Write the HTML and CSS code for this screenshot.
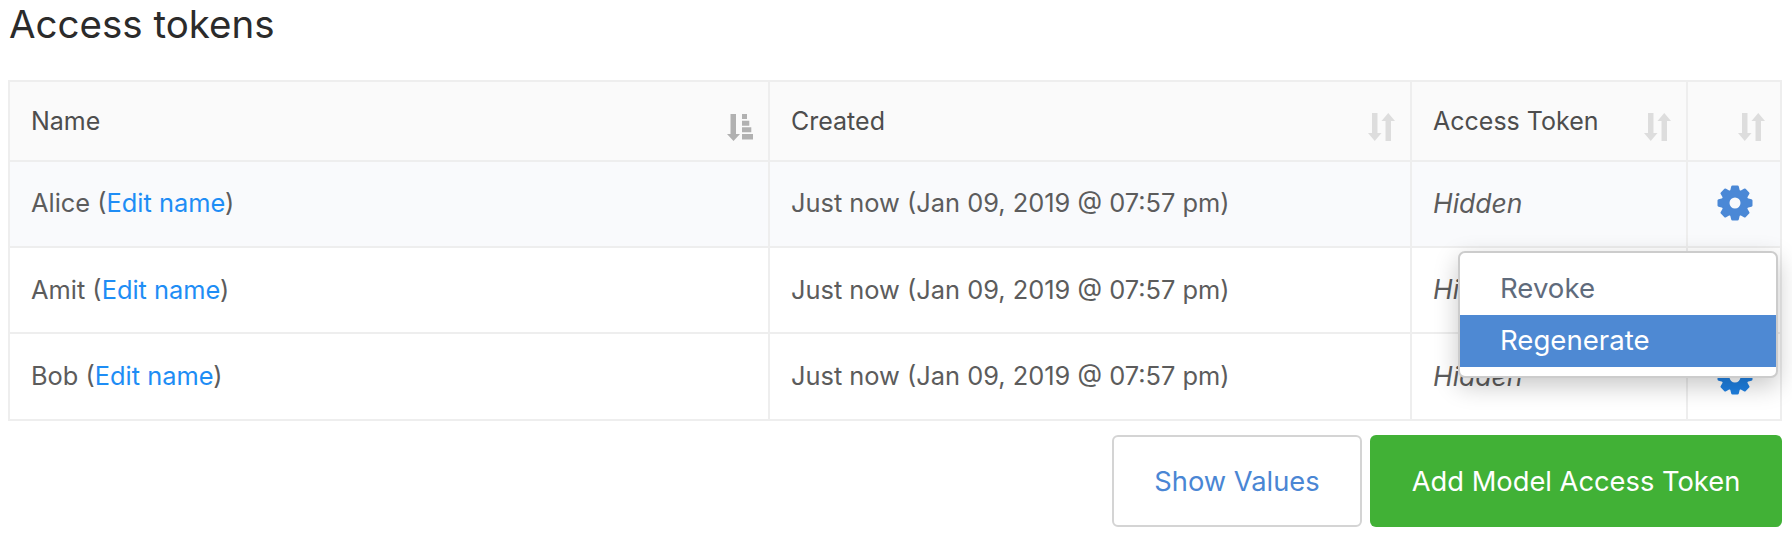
FILE: index.html
```html
<!DOCTYPE html>
<html lang="en">
<head>
<meta charset="utf-8">
<title>Access tokens</title>
<link rel="stylesheet" href="styles.css">
</head>
<body>
<svg class="defs" width="0" height="0" aria-hidden="true">
  <defs>
    <symbol id="sort" viewBox="0 0 27 28">
      <path d="M4 0h5.5v20H13.5L6.75 28 0 20H4z"/>
      <path d="M17.5 28h5.5V8h4L20.25 0 13.5 8h4z"/>
    </symbol>
    <symbol id="sorted" viewBox="0 0 26 27">
      <path d="M3.5 0h5.5v20H13L6.5 27 0 20H3.5z"/>
      <path d="M15 0h5v5h-5zM15 6.7h7.3v5H15zM15 13.3h9.3v5H15zM15 20h11.5v5.5H15z"/>
    </symbol>
    <symbol id="cog" viewBox="0 0 36 36">
      <path fill-rule="evenodd" d="M18 4.5a13.5 13.5 0 1 0 0 27 13.5 13.5 0 1 0 0-27zM18 12.5a5.5 5.5 0 1 1 0 11 5.5 5.5 0 1 1 0-11z"/>
      <path d="M13 6.5 14.2 1.6Q14.4.5 15.5.5H20.5Q21.6.5 21.8 1.6L23 6.5z"/>
      <path d="M13 6.5 14.2 1.6Q14.4.5 15.5.5H20.5Q21.6.5 21.8 1.6L23 6.5z" transform="rotate(45 18 18)"/>
      <path d="M13 6.5 14.2 1.6Q14.4.5 15.5.5H20.5Q21.6.5 21.8 1.6L23 6.5z" transform="rotate(90 18 18)"/>
      <path d="M13 6.5 14.2 1.6Q14.4.5 15.5.5H20.5Q21.6.5 21.8 1.6L23 6.5z" transform="rotate(135 18 18)"/>
      <path d="M13 6.5 14.2 1.6Q14.4.5 15.5.5H20.5Q21.6.5 21.8 1.6L23 6.5z" transform="rotate(180 18 18)"/>
      <path d="M13 6.5 14.2 1.6Q14.4.5 15.5.5H20.5Q21.6.5 21.8 1.6L23 6.5z" transform="rotate(225 18 18)"/>
      <path d="M13 6.5 14.2 1.6Q14.4.5 15.5.5H20.5Q21.6.5 21.8 1.6L23 6.5z" transform="rotate(270 18 18)"/>
      <path d="M13 6.5 14.2 1.6Q14.4.5 15.5.5H20.5Q21.6.5 21.8 1.6L23 6.5z" transform="rotate(315 18 18)"/>
    </symbol>
  </defs>
</svg>
<main class="page">
  <h1 class="title">Access tokens</h1>
  <div class="table-wrap">
    <table class="tokens">
      <colgroup>
        <col class="col-name"><col class="col-created"><col class="col-token"><col class="col-actions">
      </colgroup>
      <thead>
        <tr>
          <th><div class="head"><span>Name</span><svg class="icon-sorted"><use href="#sorted"/></svg></div></th>
          <th><div class="head"><span>Created</span><svg class="icon-sort"><use href="#sort"/></svg></div></th>
          <th><div class="head"><span>Access Token</span><svg class="icon-sort"><use href="#sort"/></svg></div></th>
          <th><div class="head"><span></span><svg class="icon-sort"><use href="#sort"/></svg></div></th>
        </tr>
      </thead>
      <tbody>
        <tr class="tinted">
          <td>Alice (<a href="#">Edit name</a>)</td>
          <td>Just now (Jan 09, 2019 @ 07:57 pm)</td>
          <td class="hidden-value">Hidden</td>
          <td class="actions"><svg class="cog"><use href="#cog"/></svg></td>
        </tr>
        <tr>
          <td>Amit (<a href="#">Edit name</a>)</td>
          <td>Just now (Jan 09, 2019 @ 07:57 pm)</td>
          <td class="hidden-value">Hidden</td>
          <td class="actions"><svg class="cog cog-bright"><use href="#cog"/></svg></td>
        </tr>
        <tr class="last">
          <td>Bob (<a href="#">Edit name</a>)</td>
          <td>Just now (Jan 09, 2019 @ 07:57 pm)</td>
          <td class="hidden-value">Hidden</td>
          <td class="actions"><svg class="cog cog-bright"><use href="#cog"/></svg></td>
        </tr>
      </tbody>
    </table>
    <ul class="menu">
      <li>Revoke</li>
      <li class="active">Regenerate</li>
    </ul>
  </div>
  <div class="buttons">
    <button class="btn btn-outline" type="button">Show Values</button>
    <button class="btn btn-green" type="button">Add Model Access Token</button>
  </div>
</main>
</body>
</html>
```
FILE: styles.css
```css
* { box-sizing: border-box; }
html, body { margin: 0; background: #fff; }
body { font-family: Inter, "Noto Sans", "Liberation Sans", sans-serif; color: #5c5c5c; height: 538px; overflow: hidden; }
.defs { position: absolute; }
.page { padding: 0 10px 0 8px; }
.title { margin: 0; height: 80px; padding-top: 1px; padding-left: 1px; font-size: 38.5px; line-height: 46px; font-weight: 400; color: #2b2b2b; }
.table-wrap { position: relative; width: 1772px; }
.tokens { width: 1772px; table-layout: fixed; border-collapse: collapse; font-size: 25.4px; border: 2px solid #eee; }
.col-name { width: 760px; }
.col-created { width: 642px; }
.col-token { width: 276px; }
.col-actions { width: 94px; }
th, td { border: 2px solid #eee; padding: 0 15px 0 21px; text-align: left; font-weight: 400; }
thead tr { height: 80px; background: #fafafa; }
tbody tr { height: 86px; }
tbody .last { height: 87px; }
.tinted { background: #f9fafc; }
th { color: #4d4d4d; font-size: 25px; }
td { padding-bottom: 2px; }
.tinted td { padding-bottom: 3px; }
.head { display: flex; justify-content: space-between; align-items: center; }
.icon-sort { width: 27px; height: 28px; margin-top: 12px; fill: #ddd; flex: none; }
.icon-sorted { width: 26px; height: 27px; margin-top: 12px; fill: #b1b1b1; flex: none; }
a { color: #1e8df5; text-decoration: none; }
.hidden-value { font-style: italic; font-size: 26.5px; }
.actions { padding: 0 0 0 1px; text-align: center; }
.cog { display: block; width: 36px; height: 36px; margin: 0 auto; fill: #4b88d6; }
.cog-bright { fill: #1f80e2; }
.menu { position: absolute; left: 1450px; top: 171px; width: 320px; height: 127px; margin: 0; padding: 10px 0 0; list-style: none; background: #fff; border: 2px solid #ccc; border-radius: 7px; box-shadow: 0 8px 24px rgba(0,0,0,.22); font-size: 27.6px; color: #5f6b7c; }
.menu li { height: 52px; line-height: 50px; padding-left: 40px; }
.menu .active { background: #4e89d3; color: #fff; }
.buttons { display: flex; justify-content: flex-end; gap: 8px; margin-top: 14px; }
.btn { height: 92px; font: inherit; font-size: 27.3px; border-radius: 6px; padding: 0; cursor: pointer; }
.btn-outline { width: 250px; background: #fff; border: 2px solid #d4d4d4; color: #4a86d4; }
.btn-green { width: 412px; background: #41b136; border: 0; color: #fff; }
```
